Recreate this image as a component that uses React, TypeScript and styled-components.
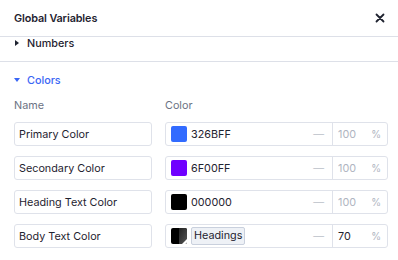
import React, { FC, useEffect, useRef } from "react";
import styled, { createGlobalStyle } from "styled-components";

const GlobalStyle = createGlobalStyle`
  html, body {
    margin: 0;
    padding: 0;
    background: #ffffff;
  }
  body {
    font-family: Inter, "Noto Sans", sans-serif;
    color: #1f2330;
  }
`;

const Panel = styled("div")`
  width: 398px;
  height: 260px;
  display: flex;
  flex-direction: column;
  background: #fff;
  overflow: hidden;
`;

const Header = styled("div")`
  height: 37px;
  flex: none;
  display: flex;
  align-items: center;
  justify-content: space-between;
  padding: 0 14px;
  border-bottom: 1px solid #dde0e8;
  box-sizing: border-box;
`;

const Title = styled("div")`
  font-size: 10.8px;
  font-weight: 600;
  letter-spacing: -0.1px;
  color: #1f2330;
`;

const Close = styled("button")`
  border: none;
  background: none;
  padding: 0;
  margin-right: -1px;
  display: flex;
  cursor: pointer;
`;

const Body = styled("div")`
  flex: 1;
  overflow: hidden;
`;

const Section = styled("div")<{ $last?: boolean }>`
  border-bottom: ${(p) => (p.$last ? "none" : "1px solid #dde0e8")};
  padding: 0 14px;
`;

const SectionHead = styled("div")<{ $open?: boolean }>`
  display: flex;
  align-items: center;
  gap: 7px;
  height: 36px;
  font-size: 10.8px;
  font-weight: 500;
  color: ${(p) => (p.$open ? "#3a66f5" : "#1f2330")};
`;

const Arrow = styled("span")<{ $open?: boolean }>`
  width: 0;
  height: 0;
  border-style: solid;
  ${(p) =>
    p.$open
      ? `border-width: 4px 3px 0 3px; border-color: #3a66f5 transparent transparent transparent;`
      : `border-width: 3px 0 3px 4px; border-color: transparent transparent transparent #1f2330; margin-left: 1px; margin-right: 1px;`}
`;

const Grid = styled("div")`
  display: grid;
  grid-template-columns: 138px 223px;
  column-gap: 13px;
  row-gap: 10px;
  padding-bottom: 12px;
`;

const ColLabel = styled("div")`
  font-size: 10.8px;
  color: #6b7283;
  height: 14px;
  line-height: 14px;
  margin-top: 1px;
  margin-bottom: -1px;
`;

const NameField = styled("div")`
  height: 24px;
  box-sizing: border-box;
  border: 1px solid #dfe2ea;
  border-radius: 3px;
  display: flex;
  align-items: center;
  padding: 0 4px;
  font-size: 10.8px;
  color: #1f2330;
`;

const ColorField = styled("div")`
  height: 24px;
  box-sizing: border-box;
  border: 1px solid #dfe2ea;
  border-radius: 3px;
  display: flex;
  align-items: stretch;
  font-size: 10.8px;
`;

const ColorPart = styled("div")`
  flex: 1;
  display: flex;
  align-items: center;
  padding: 0 5px;
  gap: 4px;
`;

const Swatch = styled("span")<{ $color: string }>`
  width: 16px;
  height: 16px;
  border-radius: 2px;
  background: ${(p) => p.$color};
  flex: none;
`;

const HexText = styled("span")`
  flex: 1;
  color: #1f2330;
`;

const Chip = styled("span")`
  border: 1px solid #c9d0dd;
  background: #eef1f6;
  border-radius: 2px;
  padding: 1px 2px;
  line-height: 14px;
  color: #1f2330;
`;

const Spacer = styled("span")`
  flex: 1;
`;

const Dash = styled("span")`
  color: #b9bec9;
  margin-right: 3px;
`;

const Opacity = styled("div")`
  width: 55px;
  border-left: 1px solid #dfe2ea;
  display: flex;
  align-items: center;
  justify-content: space-between;
  padding: 0 6px 0 5px;
  box-sizing: border-box;
`;

const OpacityValue = styled("span")<{ $set?: boolean }>`
  color: ${(p) => (p.$set ? "#1f2330" : "#b0b5c1")};
`;

const Percent = styled("span")`
  color: #b0b5c1;
  font-size: 10px;
`;

const LinkedSwatch: FC = () => (
  <svg width="16" height="16" viewBox="0 0 16 16" style={{ flex: "none" }}>
    <defs>
      <clipPath id="sw">
        <rect width="16" height="16" rx="2" />
      </clipPath>
      <linearGradient id="half" x1="0" y1="0" x2="1" y2="1">
        <stop offset="0" stopColor="#222" />
        <stop offset="1" stopColor="#555" />
      </linearGradient>
    </defs>
    <g clipPath="url(#sw)">
      <rect width="16" height="16" fill="#000" />
      <rect x="8" width="8" height="16" fill="url(#half)" />
      <path d="M16 11 L16 16 L11 16 Z" fill="#fff" />
    </g>
  </svg>
);

type Variable = {
  name: string;
  color: string;
  hex?: string;
  linked?: string;
  opacity: string;
  set?: boolean;
};

const variables: Variable[] = [
  { name: "Primary Color", color: "#326BFF", hex: "326BFF", opacity: "100" },
  { name: "Secondary Color", color: "#6F00FF", hex: "6F00FF", opacity: "100" },
  { name: "Heading Text Color", color: "#000000", hex: "000000", opacity: "100" },
  { name: "Body Text Color", color: "#000000", linked: "Headings", opacity: "70", set: true },
];

export default function App() {
  const bodyRef = useRef<HTMLDivElement>(null);

  // the panel is shown scrolled a little, so the Numbers row sits under the header
  useEffect(() => {
    if (bodyRef.current) bodyRef.current.scrollTop = 15;
  }, []);

  return (
    <>
      <GlobalStyle />
      <Panel>
        <Header>
          <Title>Global Variables</Title>
          <Close aria-label="Close">
            <svg width="10" height="10" viewBox="0 0 10 10">
              <path d="M1.5 1.5 L8.5 8.5 M8.5 1.5 L1.5 8.5" stroke="#1f2330" strokeWidth="1.8" strokeLinecap="round" />
            </svg>
          </Close>
        </Header>
        <Body ref={bodyRef}>
          <Section>
            <SectionHead>
              <Arrow />
              Numbers
            </SectionHead>
          </Section>
          <Section $last>
            <SectionHead $open>
              <Arrow $open />
              Colors
            </SectionHead>
            <Grid>
              <ColLabel>Name</ColLabel>
              <ColLabel>Color</ColLabel>
              {variables.map((v) => (
                <React.Fragment key={v.name}>
                  <NameField>{v.name}</NameField>
                  <ColorField>
                    <ColorPart>
                      {v.linked ? <LinkedSwatch /> : <Swatch $color={v.color} />}
                      {v.linked ? (
                        <>
                          <Chip>{v.linked}</Chip>
                          <Spacer />
                        </>
                      ) : (
                        <HexText>{v.hex}</HexText>
                      )}
                      <Dash>—</Dash>
                    </ColorPart>
                    <Opacity>
                      <OpacityValue $set={v.set}>{v.opacity}</OpacityValue>
                      <Percent>%</Percent>
                    </Opacity>
                  </ColorField>
                </React.Fragment>
              ))}
            </Grid>
          </Section>
        </Body>
      </Panel>
    </>
  );
}
